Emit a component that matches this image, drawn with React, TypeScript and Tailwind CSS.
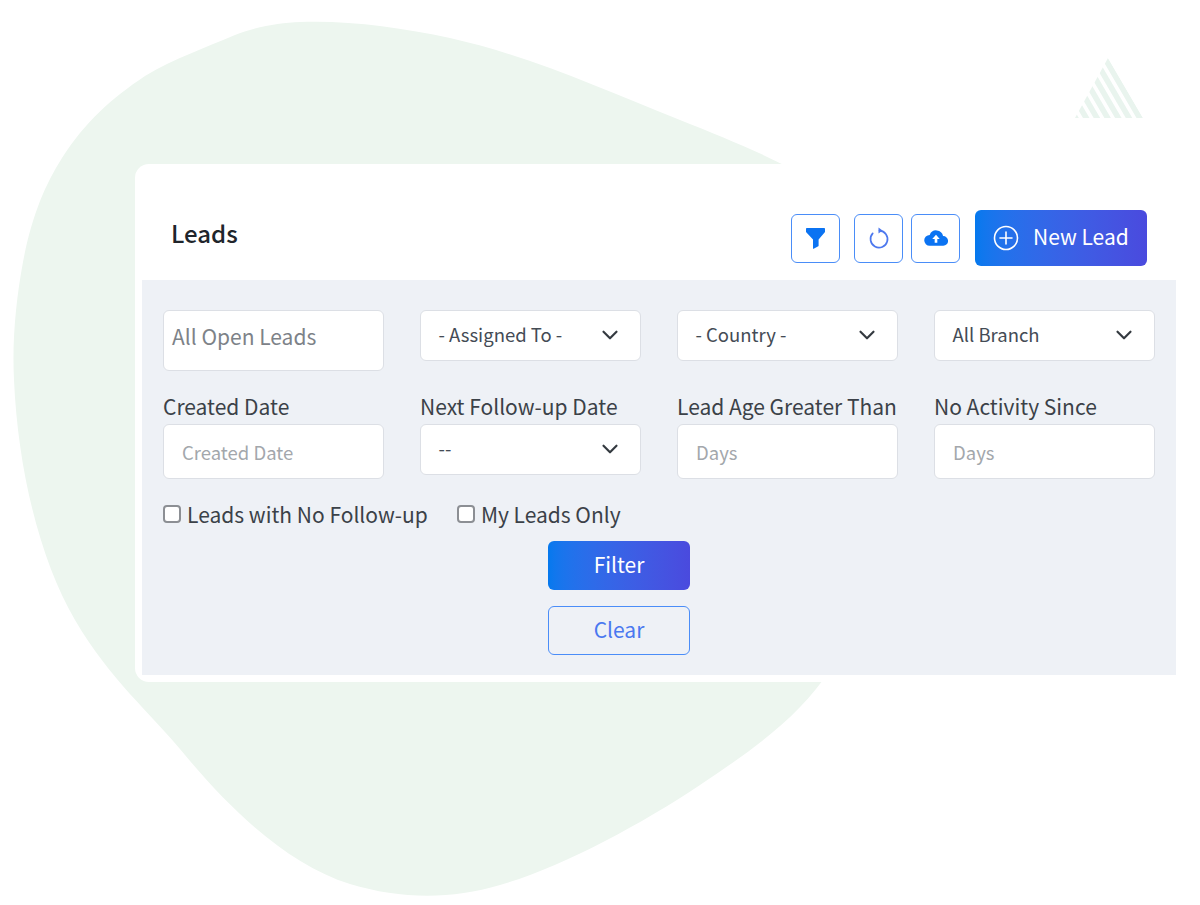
import { ChevronDown } from 'lucide-react';

const FONT = "font-['Noto_Sans_CJK_JP','Noto_Sans',sans-serif]";

// stripes of the small triangle, spaced along its base
const STRIPES = [0, 1, 2, 3, 4, 5, 6];

function Blob() {
  return (
    <svg className="absolute left-0 top-0" width="1200" height="905" viewBox="0 0 1200 905" fill="none">
      <path
        d="M300 22C345 20 400 27 450 38C530 56 600 88 680 120C720 136 755 150 790 168L830 670C800 715 760 745 700 785C640 825 560 868 500 885C450 900 400 899 350 884C290 865 235 815 185 755C150 712 110 680 75 620C40 560 18 470 14 380C12 340 16 300 23 262C32 215 45 185 62 158C85 122 112 98 145 76C175 58 205 48 235 35C258 26 280 23 300 22Z"
        fill="#edf6ef"
      />
      <clipPath id="tri">
        <polygon points="1108,58 1143,118 1075,118" />
      </clipPath>
      <g clipPath="url(#tri)" fill="#e9f4ee">
        {STRIPES.map((i) => {
          const x = 1143 - i * 10.7;
          return <polygon key={i} points={`${x},118 ${x - 35},58 ${x - 41.5},58 ${x - 6.5},118`} />;
        })}
      </g>
    </svg>
  );
}

function IconButton({ children, className }: { children: React.ReactNode; className: string }) {
  return (
    <button className={`flex h-[49px] w-[49px] items-center justify-center rounded-[6px] border-[1.5px] border-[#4a8df8] bg-white ${className}`}>
      {children}
    </button>
  );
}

function Select({ label }: { label: string }) {
  return (
    <div className="flex h-[51px] w-[221px] items-center justify-between rounded-[6px] border border-[#dcdfe5] bg-white pl-[17.5px] pr-[17px] text-[18.5px] text-[#444b55]">
      <span className="mb-[2px]">{label}</span>
      <ChevronDown size={26} strokeWidth={2} className="mb-[2px] text-[#343a40]" />
    </div>
  );
}

function DaysInput({ label }: { label: string }) {
  return (
    <div className="flex h-[55px] w-[221px] items-center rounded-[6px] border border-[#dcdfe5] bg-white pl-[18px] pt-[2px] text-[18.5px] text-[#a3a7ac]">
      {label}
    </div>
  );
}

function Field({ label, children }: { label: string; children: React.ReactNode }) {
  return (
    <div className="flex w-[221px] flex-col">
      <label className="mb-[3px] whitespace-nowrap text-[21px] leading-[30px] text-[#3b4148]">{label}</label>
      {children}
    </div>
  );
}

function Check({ label }: { label: string }) {
  return (
    <label className="flex items-center gap-[6px] whitespace-nowrap text-[21px] leading-[30px] text-[#3b4148]">
      <span className="mb-[1px] block h-[18px] w-[18px] rounded-[4px] border-2 border-[#8c8f94] bg-white" />
      {label}
    </label>
  );
}

export default function App() {
  return (
    <div className={`relative h-[905px] w-[1200px] overflow-hidden bg-white ${FONT}`}>
      <Blob />
      <div className="relative ml-[135px] flex h-[518px] translate-y-[164px] flex-col rounded-l-[14px] bg-white pb-[7px] pl-[7px] pr-[24px]">
        <div className="flex h-[116px] items-center justify-between pl-[29px] pr-[29px] pt-[32px]">
          <h1 className="mb-[11px] text-[24px] font-medium text-[#20252b]">Leads</h1>
          <div className="flex items-center">
            <IconButton className="mr-[14px]">
              <svg width="19" height="21" viewBox="0 0 19 21">
                <path d="M.8 0h17.4a.8.8 0 0 1 .8.8V4L12.6 11.6V17.8a.6.6 0 0 1-.3.5L7.6 20.8a.4.4 0 0 1-.6-.4V11.6L0 4V.8A.8.8 0 0 1 .8 0Z" fill="#0b73f2" />
              </svg>
            </IconButton>
            <IconButton className="mr-[8px]">
              <svg width="24" height="24" viewBox="0 0 24 24" fill="none">
                <path d="M12.5 4.6A8.5 8.5 0 1 1 5.7 7.4" stroke="#4d78ee" strokeWidth="1.7" strokeLinecap="round" />
                <path d="M11.5 1.4 15.5 4.6 11.5 7.6Z" fill="#4d78ee" />
              </svg>
            </IconButton>
            <IconButton className="mr-[15px]">
              <svg width="24" height="16" viewBox="0 0 25 17">
                <path d="M20 6.4A7.4 7.4 0 0 0 5.8 5.2 5.8 5.8 0 0 0 5.8 16.8h14.4a5.2 5.2 0 0 0-.2-10.4Z" fill="#0b73f2" />
                <path d="M12.5 5 16.5 9.6h-2.6v4h-2.8v-4H8.5Z" fill="#fff" />
              </svg>
            </IconButton>
            <button className="flex h-[56px] w-[172px] items-center gap-[14px] rounded-[6px] bg-gradient-to-r from-[#0479ee] to-[#4a4ade] pl-[18px] text-[21px] text-white">
              <svg width="26" height="26" viewBox="0 0 26 26" fill="none" stroke="#fff" strokeWidth="1.6">
                <circle cx="13" cy="13" r="11.5" />
                <path d="M13 7v12M7 13h12" strokeLinecap="round" />
              </svg>
              <span className="mb-[3px]">New Lead</span>
            </button>
          </div>
        </div>

        <div className="flex flex-1 flex-col bg-[#eef1f6] pl-[21px] pr-[21px] pt-[30px]">
          <div className="flex items-start gap-[36px]">
            <div className="flex h-[61px] w-[221px] items-center rounded-[6px] border border-[#dcdfe5] bg-white pb-[8px] pl-[8px] text-[21px] text-[#7d8288]">
              All Open Leads
            </div>
            <Select label="- Assigned To -" />
            <Select label="- Country -" />
            <Select label="All Branch" />
          </div>

          <div className="mt-[20px] flex items-start gap-[36px]">
            <Field label="Created Date">
              <DaysInput label="Created Date" />
            </Field>
            <Field label="Next Follow-up Date">
              <Select label="--" />
            </Field>
            <Field label="Lead Age Greater Than">
              <DaysInput label="Days" />
            </Field>
            <Field label="No Activity Since">
              <DaysInput label="Days" />
            </Field>
          </div>

          <div className="mt-[20px] flex items-center gap-[29px]">
            <Check label="Leads with No Follow-up" />
            <Check label="My Leads Only" />
          </div>

          <div className="ml-[385px] mt-[12px] flex w-[142px] flex-col gap-[16px] text-[21px]">
            <button className="flex h-[49px] items-center justify-center rounded-[6px] bg-gradient-to-r from-[#0479ee] to-[#4a4ade] pb-[2px] text-white">
              Filter
            </button>
            <button className="flex h-[49px] items-center justify-center rounded-[6px] border-[1.5px] border-[#4a8df8] pb-[2px] text-[#4a78f0]">
              Clear
            </button>
          </div>
        </div>
      </div>
    </div>
  );
}
